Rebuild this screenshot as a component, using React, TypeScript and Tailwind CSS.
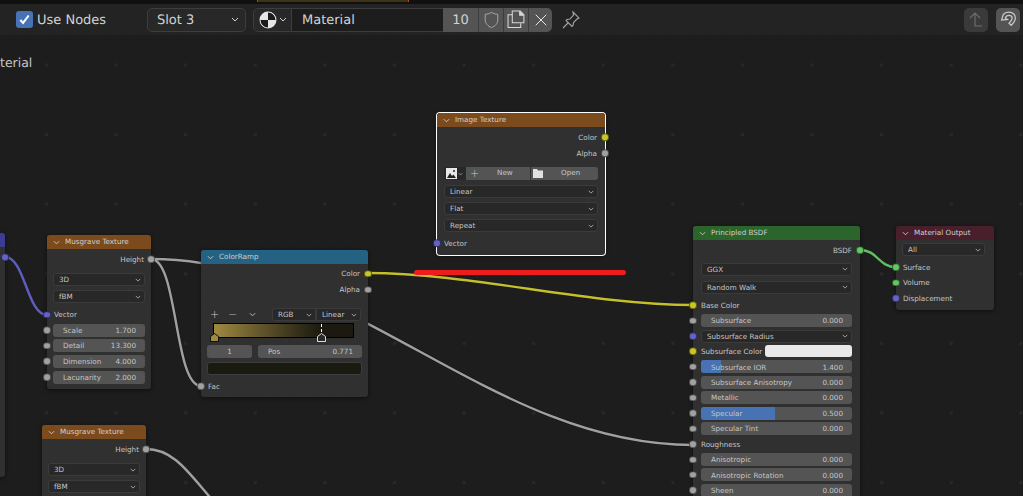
import React from 'react';
import { X } from 'lucide-react';

const GRAY = 'bg-[#a1a1a1]';
const YELLOW = 'bg-[#c7c729]';
const BLUE = 'bg-[#6363c7]';
const GREEN = 'bg-[#63c763]';

const Chevron: React.FC<{ className?: string }> = ({ className = 'w-[6px] h-[4px]' }) => (
  <svg viewBox="0 0 8 5" className={`shrink-0 ${className}`} fill="none" stroke="currentColor" strokeWidth="1">
    <path d="M1 1l3 3 3-3" />
  </svg>
);

const Socket: React.FC<{ color: string; side: 'left' | 'right' }> = ({ color, side }) => (
  <span
    className={`absolute top-1/2 -translate-y-1/2 w-[7.500px] h-[7.500px] rounded-full border-[0.5px] border-black/50 ${color} ${
      side === 'left' ? 'left-[-3.750px]' : 'right-[-3.750px]'
    }`}
  />
);

const Node: React.FC<{
  className: string;
  title: string;
  header: string;
  selected?: boolean;
  children: React.ReactNode;
}> = ({ className, title, header, selected, children }) => (
  <div
    className={`absolute rounded-[3px] bg-[#303030] shadow-[0_1px_4px_rgba(0,0,0,0.55)] ${selected ? 'ring-1 ring-white' : ''} ${className}`}
  >
    <div className={`h-[14px] flex items-center gap-[5px] pl-[6px] rounded-t-[3px] text-[#cfcfcf] ${header}`}>
      <Chevron className="w-[7px] h-[5px]" />
      <span>{title}</span>
    </div>
    {children}
  </div>
);

// one line of a node; socket sits on the node edge
const Row: React.FC<{
  h: string;
  px: string;
  socket?: string;
  side?: 'left' | 'right';
  children?: React.ReactNode;
}> = ({ h, px, socket, side = 'left', children }) => (
  <div className={`relative flex items-center ${h} ${px}`}>
    {socket && <Socket color={socket} side={side} />}
    {typeof children === 'string' ? <span className="relative top-[1px]">{children}</span> : children}
  </div>
);

const Dropdown: React.FC<{ label: string; className?: string }> = ({ label, className = 'w-full' }) => (
  <div className={`h-[13px] flex items-center justify-between rounded-[3px] bg-[#282828] border border-[#3b3b3b] pl-[5px] pr-[3px] ${className}`}>
    <span className="relative top-[1px]">{label}</span>
    <Chevron />
  </div>
);

const Field: React.FC<{ label: string; value: string; fill?: number }> = ({ label, value, fill }) => (
  <div className="relative w-full h-[13px] flex items-center justify-between rounded-[3px] bg-[#545454] pl-[10px] pr-[9px] overflow-hidden">
    {fill !== undefined && <span className="absolute left-0 inset-y-0 bg-[#4772b3]" style={{ width: `${fill}%` }} />}
    <span className="relative top-[1px]">{label}</span>
    <span className="relative top-[1px]">{value}</span>
  </div>
);

const Wires = () => (
  <svg className="absolute inset-0 w-[1023px] h-[496px]" fill="none" strokeLinecap="round">
    <g stroke="#0d0d0d" strokeOpacity="0.5" strokeWidth="3.5">
      <path d="M151 259C350 259 490 445 693 445" />
      <path d="M151 259C178 259 174 386 201 386" />
      <path d="M368 273C470 273 590 305 693 305" />
    </g>
    <g strokeWidth="2.4">
      <path d="M151 259C350 259 490 445 693 445" stroke="#a0a0a0" />
      <path d="M151 259C178 259 174 386 201 386" stroke="#a0a0a0" />
      <path d="M146 449C175 449 190 475 215 503" stroke="#a0a0a0" />
      <path d="M368 273C470 273 590 305 693 305" stroke="#c4bf2c" />
      <path d="M5 257C25 257 27 315 47 315" stroke="#5d5dc2" />
      <path d="M860 250C878 250 878 267 896 267" stroke="#5fc05f" />
    </g>
  </svg>
);

const Grid = () => (
  <svg className="absolute inset-0 w-[1023px] h-[496px]">
    <defs>
      <pattern id="minor" x="46" y="64" width="13.92" height="13.92" patternUnits="userSpaceOnUse">
        <rect width="1" height="1" fill="#212121" />
      </pattern>
      <pattern id="major" x="45" y="63.5" width="69.6" height="69.6" patternUnits="userSpaceOnUse">
        <rect width="3" height="3" fill="#282828" />
      </pattern>
    </defs>
    <rect width="1023" height="496" fill="url(#minor)" />
    <rect width="1023" height="496" fill="url(#major)" />
  </svg>
);

const TopStrip = () => (
  <div className="relative z-10 h-[4px] bg-[#101010]">
    <div className="ml-[257px] w-[152px] h-[1.500px] bg-[#3d3415] border-x border-[#b8481c]" />
  </div>
);

const Header = () => (
  <div className="relative z-10 flex items-center h-[31px] bg-[#232323] pl-[16px] text-[13px] text-[#d2d2d2]">
    <span className="w-[17px] h-[17px] rounded-[3px] bg-[#4772b3] flex items-center justify-center">
      <svg viewBox="0 0 14 14" className="w-[13px] h-[13px]" fill="none" stroke="#fff" strokeWidth="2.2">
        <path d="M2.5 7.5l3 3.2 6-8" />
      </svg>
    </span>
    <span className="relative top-[1px] ml-[4px] w-[70px] whitespace-nowrap">Use Nodes</span>
    <div className="ml-[40px] w-[99px] h-[24px] flex items-center justify-between rounded-[5px] bg-[#282828] border border-[#3d3d3d] pl-[9px] pr-[6px]">
      <span className="relative top-[1px]">Slot 3</span>
      <Chevron className="w-[8px] h-[5px]" />
    </div>
    <div className="ml-[7px] flex h-[24px]">
      <div className="w-[39px] flex items-center gap-[2px] pl-[5px] rounded-l-[5px] bg-[#282828] border border-[#3d3d3d]">
        <svg viewBox="0 0 18 18" className="w-[18px] h-[18px] shrink-0">
          <circle cx="9" cy="9" r="8.5" fill="#e6e6e6" />
          <path d="M9 1.500A7.500 7.500 0 0 1 16.500 9H9zM9 9v7.500A7.500 7.500 0 0 1 1.500 9z" fill="#1b1b1b" />
        </svg>
        <Chevron className="w-[8px] h-[5px]" />
      </div>
      <div className="w-[151px] flex items-center pl-[10px] bg-[#1d1d1d] border-y border-[#3d3d3d]">
        <span className="relative top-[1px]">Material</span>
      </div>
      <div className="w-[35px] flex items-center justify-center bg-[#545454]">
        <span className="relative top-[1px]">10</span>
      </div>
      <div className="w-[25px] flex items-center justify-center bg-[#545454] border-l border-[#3d3d3d]">
        <svg viewBox="0 0 18 20" className="w-[17px] h-[18px]" fill="none" stroke="#a8a8a8" strokeWidth="1.1">
          <path d="M9 1.5c2.2 1.4 4.5 2 7 2.2v6c0 4.2-3 7.2-7 8.8-4-1.6-7-4.6-7-8.8v-6c2.5-.2 4.8-.8 7-2.2z" />
        </svg>
      </div>
      <div className="w-[25px] flex items-center justify-center bg-[#545454] border-l border-[#3d3d3d]">
        <svg viewBox="0 0 18 18" className="w-[19px] h-[19px]" fill="none" stroke="#d8d8d8" strokeWidth="1">
          <path d="M5.5 4.5H1v12h12v-4" />
          <path d="M5 1h7.5l3.5 3.5V12H5z" fill="#545454" />
          <path d="M12 1v4h4" fill="#d8d8d8" />
        </svg>
      </div>
      <div className="w-[24px] flex items-center justify-center rounded-r-[5px] bg-[#545454] border-l border-[#3d3d3d]">
        <X size={20} strokeWidth={1.2} color="#e6e6e6" />
      </div>
    </div>
    <svg viewBox="0 0 20 20" className="ml-[9px] w-[20px] h-[20px]" fill="none" stroke="#a6a6a6" strokeWidth="1.1">
      <path d="M12 2l6 6-2 1-3.500 3.500-.5 3-1 1-6-6 1-1 3-.5L12.500 5z" />
      <path d="M7 13l-5 5" />
    </svg>
    <div className="ml-auto flex h-[24px] pr-[3px]">
      <div className="w-[24px] rounded-[5px] bg-[#3a3a3a] flex items-center justify-center">
        <svg viewBox="0 0 18 18" className="w-[18px] h-[18px]" fill="none" stroke="#6f6f6f" strokeWidth="1.1">
          <path d="M3 7l5-5 5 5M8 2v13h7" />
        </svg>
      </div>
      <div className="ml-[8px] w-[24px] rounded-[5px] bg-[#545454] flex items-center justify-center">
        <svg viewBox="0 0 18 18" className="w-[19px] h-[19px]" fill="none" stroke="#c8c8c8" strokeWidth="1.200">
          <path d="M3 7.500C3.500 3.800 6 2 9.500 2c3.500 0 6 2.500 6 5.500 0 3-2 5-4 7l-2-2c1.500-1.500 3-3 3-5 0-1.500-1.200-2.500-3-2.500-1.500 0-3 .8-3.500 2.500L8 9l-5.500.5z" />
        </svg>
      </div>
    </div>
  </div>
);

const ColorRampNode = () => (
  <Node className="left-[201px] top-[250px] w-[167px]" title="ColorRamp" header="bg-[#246283]">
    <div className="h-[1.500px]" />
    <Row h="h-[16px]" px="pr-[8px] justify-end" socket={YELLOW} side="right">Color</Row>
    <Row h="h-[16px]" px="pr-[8px] justify-end" socket={GRAY} side="right">Alpha</Row>
    <div className="mt-[10.500px] h-[13px] flex items-center pl-[6px] pr-[7px]">
      <span className="w-[18px] pl-[3px] text-[11px] leading-none font-light">+</span>
      <span className="w-[21px] pl-[3px] text-[11px] leading-none font-light">−</span>
      <span className="w-[26px] pl-[3px]"><Chevron className="w-[7px] h-[5px]" /></span>
      <Dropdown label="RGB" className="w-[44px] rounded-r-none" />
      <Dropdown label="Linear" className="w-[45px] rounded-l-none" />
    </div>
    <div className="relative mt-[2px] ml-[12px] w-[141px] h-[15px] border border-black bg-gradient-to-r from-[#a08a40] to-[#1c1a10] to-[77%]">
      <span className="absolute left-[107px] top-0 h-[13px] border-l border-dashed border-white" />
      <svg viewBox="0 0 9 9" className="absolute left-[-4px] top-[9px] w-[9px] h-[9px]">
        <path d="M.5 3.500L4.500.5l4 3v5h-8z" fill="#a08a40" stroke="#111" />
      </svg>
      <svg viewBox="0 0 9 9" className="absolute left-[103px] top-[9px] w-[9px] h-[9px]">
        <path d="M.5 3.500L4.500.5l4 3v5h-8z" fill="#2a2a2a" stroke="#ddd" />
      </svg>
    </div>
    <div className="mt-[7px] flex gap-[6px] px-[6px]">
      <div className="w-[45px] h-[13px] rounded-[3px] bg-[#545454] flex items-center justify-center">
        <span className="relative top-[1px]">1</span>
      </div>
      <div className="flex-1"><Field label="Pos" value="0.771" /></div>
    </div>
    <div className="mt-[4px] mx-[6px] h-[13px] rounded-[3px] bg-[#1b1a10] border border-[#3d3d3d]" />
    <Row h="h-[15.500px]" px="pl-[7px] mt-[3.500px] mb-[3px]" socket={GRAY}>Fac</Row>
  </Node>
);

const ImageTextureNode = () => (
  <Node className="left-[437px] top-[113px] w-[168px]" title="Image Texture" header="bg-[#7b4b1e]" selected>
    <div className="h-[2px]" />
    <Row h="h-[16px]" px="pr-[8px] justify-end" socket={YELLOW} side="right">Color</Row>
    <Row h="h-[16px]" px="pr-[8px] justify-end" socket={GRAY} side="right">Alpha</Row>
    <div className="mt-[6px] mx-[7px] h-[13px] flex">
      <div className="w-[22px] rounded-l-[3px] bg-[#282828] flex items-center gap-[1px] pl-[2px]">
        <svg viewBox="0 0 11 11" className="w-[11px] h-[11px] shrink-0">
          <path d="M0 0h11v11H0z" fill="#e8e8e8" />
          <path d="M1 10l3-5 2 3 1.500-1.500L10 10z" fill="#222" />
          <circle cx="8" cy="3" r="1" fill="#222" />
        </svg>
        <Chevron className="w-[5px] h-[4px]" />
      </div>
      <div className="w-[64px] bg-[#545454] flex items-center pl-[4px] relative">
        <span className="text-[11px] leading-none font-light">+</span>
        <span className="absolute left-[31px] top-[1px]">New</span>
      </div>
      <div className="ml-[1px] flex-1 rounded-r-[3px] bg-[#545454] flex items-center pl-[2px] relative">
        <svg viewBox="0 0 10 9" className="w-[10px] h-[9px]">
          <path d="M0 0h4l1 1.500h5V9H0z" fill="#e0e0e0" />
        </svg>
        <span className="absolute left-[30px] top-[1px]">Open</span>
      </div>
    </div>
    <div className="mt-[5px] mx-[7px] flex flex-col gap-[4px]">
      <Dropdown label="Linear" />
      <Dropdown label="Flat" />
      <Dropdown label="Repeat" />
    </div>
    <Row h="h-[16px]" px="pl-[7px] mt-[3px] mb-[4px]" socket={BLUE}>Vector</Row>
  </Node>
);

const Musgrave: React.FC<{ className: string; cut?: boolean }> = ({ className, cut }) => (
  <Node className={className} title="Musgrave Texture" header="bg-[#7b4b1e]">
    <div className="h-[2px]" />
    <Row h="h-[16px]" px="pr-[7px] justify-end" socket={GRAY} side="right">Height</Row>
    <div className="mt-[6px] px-[6px] flex flex-col gap-[4px]">
      <Dropdown label="3D" />
      <Dropdown label="fBM" />
    </div>
    {!cut && (
      <div className="pb-[4px]">
        <Row h="h-[15.500px]" px="pl-[7px] mt-[4px]" socket={BLUE}>Vector</Row>
        <Row h="h-[15.600px]" px="px-[6px]" socket={GRAY}><Field label="Scale" value="1.700" /></Row>
        <Row h="h-[15.600px]" px="px-[6px]" socket={GRAY}><Field label="Detail" value="13.300" /></Row>
        <Row h="h-[15.600px]" px="px-[6px]" socket={GRAY}><Field label="Dimension" value="4.000" /></Row>
        <Row h="h-[15.600px]" px="px-[6px]" socket={GRAY}><Field label="Lacunarity" value="2.000" /></Row>
      </div>
    )}
  </Node>
);

const PrincipledNode = () => {
  const px = 'px-[8px]';
  const h = 'h-[15.450px]';
  return (
    <Node className="left-[693px] top-[226px] w-[167px] h-[290px]" title="Principled BSDF" header="bg-[#2b652b]">
      <div className="h-[2.500px]" />
      <Row h={h} px="pr-[8px] justify-end" socket={GREEN} side="right">BSDF</Row>
      <div className="mt-[5px] px-[8px] flex flex-col gap-[5px]">
        <Dropdown label="GGX" />
        <Dropdown label="Random Walk" />
      </div>
      <Row h={h} px={`${px} mt-[3.500px]`} socket={YELLOW}>Base Color</Row>
      <Row h={h} px={px} socket={GRAY}><Field label="Subsurface" value="0.000" /></Row>
      <Row h={h} px={px} socket={BLUE}><Dropdown label="Subsurface Radius" /></Row>
      <Row h={h} px={`${px} justify-between`} socket={YELLOW}>
        <span className="relative top-[1px]">Subsurface Color</span>
        <span className="w-[87px] h-[12px] rounded-[3px] bg-[#e9e9e9]" />
      </Row>
      <Row h={h} px={px} socket={GRAY}><Field label="Subsurface IOR" value="1.400" fill={13} /></Row>
      <Row h={h} px={px} socket={GRAY}><Field label="Subsurface Anisotropy" value="0.000" /></Row>
      <Row h={h} px={px} socket={GRAY}><Field label="Metallic" value="0.000" /></Row>
      <Row h={h} px={px} socket={GRAY}><Field label="Specular" value="0.500" fill={49} /></Row>
      <Row h={h} px={px} socket={GRAY}><Field label="Specular Tint" value="0.000" /></Row>
      <Row h={h} px={px} socket={GRAY}>Roughness</Row>
      <Row h={h} px={px} socket={GRAY}><Field label="Anisotropic" value="0.000" /></Row>
      <Row h={h} px={px} socket={GRAY}><Field label="Anisotropic Rotation" value="0.000" /></Row>
      <Row h={h} px={px} socket={GRAY}><Field label="Sheen" value="0.000" /></Row>
    </Node>
  );
};

const OutputNode = () => (
  <Node className="left-[896px] top-[226px] w-[98px]" title="Material Output" header="bg-[#4a1f2c]">
    <div className="mt-[3px] pl-[6px] pr-[9px]"><Dropdown label="All" /></div>
    <Row h="h-[15.500px]" px="pl-[7px] mt-[3.500px]" socket={GREEN}>Surface</Row>
    <Row h="h-[15.500px]" px="pl-[7px]" socket={GREEN}>Volume</Row>
    <Row h="h-[15.500px]" px="pl-[7px] mb-[4px]" socket={BLUE}>Displacement</Row>
  </Node>
);

export default function App() {
  return (
    <div className="relative w-[1023px] h-[496px] overflow-hidden bg-[#1d1d1d] font-['DejaVu_Sans',sans-serif] text-[7.200px] text-[#c6c6c6] [text-rendering:geometricPrecision]">
      <Grid />
      <Wires />
      <TopStrip />
      <Header />
      <div className="absolute left-0 top-[54px] text-[12.500px] text-[#c8c8c8]">terial</div>

      {/* the node cut off at the left edge */}
      <Node className="left-[-95px] top-[233px] w-[100px] h-[244px]" title="" header="bg-[#3c3c96]">
        <Row h="h-[20px]" px="" socket={BLUE} side="right" />
      </Node>
      <Musgrave className="left-[47px] top-[235px] w-[104px]" />
      <Musgrave className="left-[42px] top-[425px] w-[104px] h-[90px]" cut />
      <ColorRampNode />
      <ImageTextureNode />
      <PrincipledNode />
      <OutputNode />

      {/* red annotation stroke */}
      <div className="absolute left-[414px] top-[270px] w-[212px] h-[5px] rounded-full bg-[#ee1c1c]" />
    </div>
  );
}
